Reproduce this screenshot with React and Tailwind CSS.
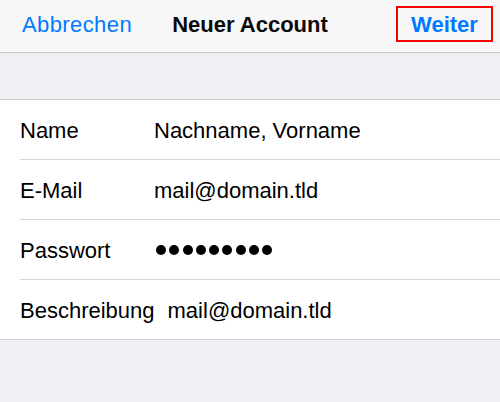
import React from "react";

const rows = [
  { label: "Name", value: "Nachname, Vorname" },
  { label: "E-Mail", value: "mail@domain.tld" },
  { label: "Passwort", dots: 9 },
  { label: "Beschreibung", value: "mail@domain.tld" },
];

export default function App() {
  return (
    <div
      className="w-[500px] h-[402px] bg-[#efeff4] overflow-hidden text-black"
      style={{ fontFamily: '"Liberation Sans", Arial, sans-serif' }}
    >
      <div className="h-[53px] bg-[#f7f7f7] border-b border-[#c8c7cc] grid grid-cols-[1fr_auto_1fr] items-center px-[7px] pb-[4px]">
        <div className="pl-[15px] text-[22px] tracking-[0.4px] text-[#007aff]">Abbrechen</div>
        <div className="text-[22px] font-bold text-[#0a0a0a]">Neuer Account</div>
        <div className="flex justify-end">
          <span className="border-2 border-[#f00] h-[36px] w-[97px] flex items-center justify-center text-[22px] font-bold text-[#007aff]">
            Weiter
          </span>
        </div>
      </div>
      <div className="h-[46px]" />
      <div className="bg-white border-t border-b border-[#d1d0d5]">
        {rows.map((r, i) => (
          <div key={r.label} className="pl-[20px]">
            <div
              className={
                "h-[59px] flex items-center text-[22px] " +
                (i < rows.length - 1 ? "border-b border-[#d9d8dc] h-[60px]" : "")
              }
            >
              <span className="min-w-[121px] mr-[13px] pt-[1px]">{r.label}</span>
              {r.dots ? (
                <span className="flex gap-[3.3px] ml-[2px]">
                  {Array.from({ length: r.dots }).map((_, k) => (
                    <span key={k} className="w-[10px] h-[10px] rounded-full bg-black" />
                  ))}
                </span>
              ) : (
                <span className="pt-[1px]">{r.value}</span>
              )}
            </div>
          </div>
        ))}
      </div>
    </div>
  );
}
